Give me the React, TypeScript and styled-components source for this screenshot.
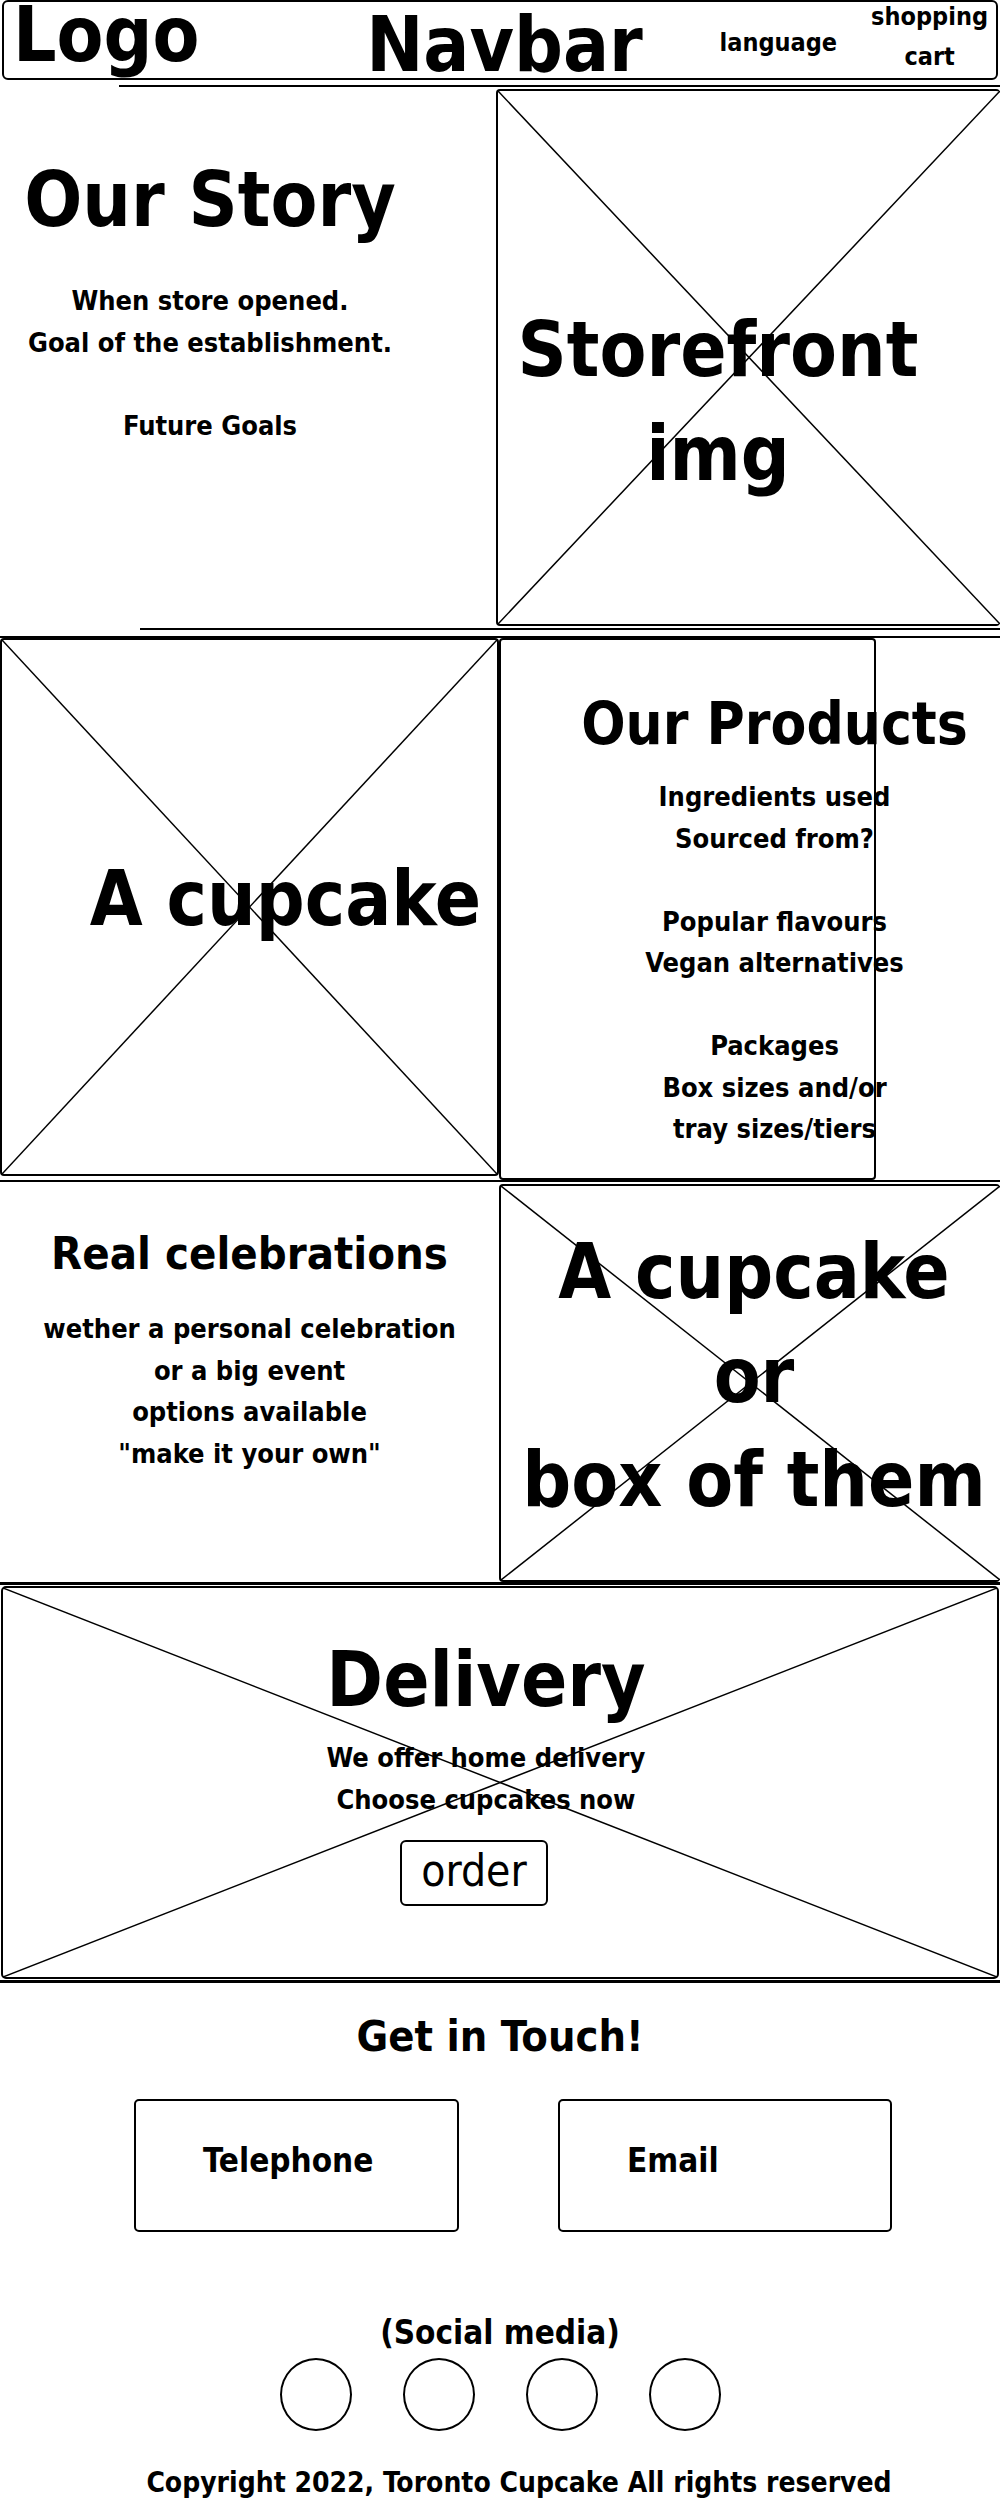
import styled, { createGlobalStyle } from 'styled-components';

const GlobalStyle = createGlobalStyle`
  html, body {
    margin: 0;
    padding: 0;
    background: #fff;
  }
  body {
    font-family: "DejaVu Sans Condensed", "DejaVu Sans", sans-serif;
    font-stretch: condensed;
    font-weight: bold;
    color: #000;
    overflow-x: hidden;
  }
  * {
    box-sizing: border-box;
  }
`

const Page = styled.div`
    width: 1000px;
    height: 2500px;
    overflow: hidden;
`

const NavBar = styled.header`
    display: grid;
    grid-template-columns: 1fr auto 1fr;
    align-items: start;
    height: 80px;
    margin: 0 2px;
    padding-left: 9px;
    border: 2px solid #000;
    border-radius: 6px;
`
const Logo = styled.div`
    font-size: 76px;
    line-height: 64px;
    margin-top: 1px;
`
const NavTitle = styled.div`
    font-size: 76px;
    line-height: 64px;
    margin-top: 11px;
`
const NavLinks = styled.div`
    justify-self: end;
    display: flex;
    align-items: flex-start;
    gap: 34px;
    padding-right: 8px;
`
const NavLink = styled.div<{ $size: number; $lh: number; $top: number }>`
    font-size: ${p => p.$size}px;
    line-height: ${p => p.$lh}px;
    margin-top: ${p => p.$top}px;
    text-align: center;
`

const Rule = styled.div<{ $indent?: number; $gap?: number }>`
    height: 2px;
    background: #000;
    margin-left: ${p => p.$indent ?? 0}px;
    margin-top: ${p => p.$gap ?? 0}px;
`

const Row = styled.section<{ $split: number; $height: number }>`
    display: grid;
    grid-template-columns: ${p => p.$split}px 1fr;
    height: ${p => p.$height}px;
`

const TextCol = styled.div<{ $padTop: number; $padRight?: number }>`
    text-align: center;
    padding-top: ${p => p.$padTop}px;
    padding-right: ${p => p.$padRight ?? 0}px;
`
const Title = styled.h1<{ $size: number; $lh?: number }>`
    margin: 0;
    font-size: ${p => p.$size}px;
    line-height: ${p => (p.$lh ? `${p.$lh}px` : '1.2')};
    font-weight: bold;
`
const Body = styled.p<{ $top?: number }>`
    margin: ${p => p.$top ?? 0}px 0 0;
    font-size: 27px;
    line-height: 41.5px;
`

const ImageBox = styled.div<{ $height: number; $top?: number; $padTop: number; $padLeft?: number; $padRight?: number; $open?: boolean }>`
    position: relative;
    display: flex;
    flex-direction: column;
    align-items: center;
    height: ${p => p.$height}px;
    margin-top: ${p => p.$top ?? 0}px;
    padding: ${p => p.$padTop}px ${p => p.$padRight ?? 0}px 0 ${p => p.$padLeft ?? 0}px;
    border: 2px solid #000;
    border-right: ${p => (p.$open ? 'none' : '2px solid #000')};
    border-radius: 4px;
    text-align: center;
`
const ImageLabel = styled.div`
    position: relative;
    font-size: 76px;
    line-height: 104px;
    white-space: nowrap;
`
const CrossSvg = styled.svg`
    position: absolute;
    inset: 0;
    width: 100%;
    height: 100%;
`

const ProductsFrame = styled.div`
    width: 377px;
    height: 542px;
    padding-top: 49px;
    border: 2px solid #000;
    border-radius: 4px;
`
const ProductsText = styled.div`
    width: 451px;
    margin-left: 48px;
    text-align: center;
    white-space: nowrap;
`

const DeliveryOuter = styled.section`
    padding: 1px 0;
    border-top: 3px solid #000;
    border-bottom: 3px solid #000;
`
const DeliveryBox = styled.div`
    position: relative;
    display: flex;
    flex-direction: column;
    align-items: center;
    height: 393px;
    margin: 0 1px;
    padding: 46px 28px 0 0;
    border: 2px solid #000;
    border-radius: 5px;
    text-align: center;
`
const DeliveryText = styled.div`
    position: relative;
`
const OrderButton = styled.button`
    position: relative;
    width: 148px;
    height: 66px;
    margin: 20px 24px 0 0;
    padding: 0 0 4px;
    background: #fff;
    color: #000;
    border: 2px solid #000;
    border-radius: 6px;
    font-family: inherit;
    font-stretch: condensed;
    font-weight: normal;
    font-size: 44px;
    line-height: 1;
`

const Contact = styled.section`
    padding-top: 28px;
    text-align: center;
`
const ContactRow = styled.div`
    display: flex;
    gap: 99px;
    margin-top: 38px;
    padding-left: 134px;
`
const ContactCard = styled.div<{ $width: number }>`
    width: ${p => p.$width}px;
    height: 133px;
    padding: 40px 0 0 67px;
    border: 2px solid #000;
    border-radius: 5px;
    text-align: left;
    font-size: 33px;
    line-height: 40px;
`
const SocialLabel = styled.div`
    margin-top: 81px;
    font-size: 33px;
    line-height: 40px;
`
const Circles = styled.div`
    display: flex;
    justify-content: center;
    gap: 51px;
    margin-top: 5px;
`
const Circle = styled.span`
    width: 72px;
    height: 73px;
    border: 2px solid #000;
    border-radius: 50%;
`
const Copyright = styled.div`
    margin-top: 35px;
    padding-left: 38px;
    font-size: 28px;
    line-height: 34px;
    white-space: nowrap;
`

function Cross() {
    return (
        <CrossSvg viewBox="0 0 100 100" preserveAspectRatio="none">
            <line x1="0" y1="0" x2="100" y2="100" stroke="#000" strokeWidth="1.5" vectorEffect="non-scaling-stroke" />
            <line x1="100" y1="0" x2="0" y2="100" stroke="#000" strokeWidth="1.5" vectorEffect="non-scaling-stroke" />
        </CrossSvg>
    )
}

function App() {
    return (
        <Page>
            <GlobalStyle />
            <NavBar>
                <Logo>Logo</Logo>
                <NavTitle>Navbar</NavTitle>
                <NavLinks>
                    <NavLink $size={25} $lh={30} $top={26}>language</NavLink>
                    <NavLink $size={25} $lh={40} $top={-5}>shopping<br />cart</NavLink>
                </NavLinks>
            </NavBar>

            <Rule $indent={119} $gap={5} />
            <Row $split={496} $height={541}>
                <TextCol $padTop={67} $padRight={76}>
                    <Title $size={76}>Our Story</Title>
                    <Body $top={35}>
                        When store opened.<br />
                        Goal of the establishment.<br />
                        <br />
                        Future Goals
                    </Body>
                </TextCol>
                <ImageBox $height={537} $top={2} $padTop={207} $padRight={62} $open>
                    <Cross />
                    <ImageLabel>Storefront<br />img</ImageLabel>
                </ImageBox>
            </Row>
            <Rule $indent={140} />

            <Rule $gap={6} />
            <Row $split={499} $height={542}>
                <ImageBox $height={538} $padTop={207} $padLeft={72}>
                    <Cross />
                    <ImageLabel>A cupcake</ImageLabel>
                </ImageBox>
                <ProductsFrame>
                    <ProductsText>
                        <Title $size={58} $lh={70}>Our Products</Title>
                        <Body $top={17}>
                            Ingredients used<br />
                            Sourced from?<br />
                            <br />
                            Popular flavours<br />
                            Vegan alternatives<br />
                            <br />
                            Packages<br />
                            Box sizes and/or<br />
                            tray sizes/tiers
                        </Body>
                    </ProductsText>
                </ProductsFrame>
            </Row>
            <Rule />

            <Row $split={499} $height={400}>
                <TextCol $padTop={45}>
                    <Title $size={45} $lh={54}>Real celebrations</Title>
                    <Body $top={27}>
                        wether a personal celebration<br />
                        or a big event<br />
                        options available<br />
                        "make it your own"
                    </Body>
                </TextCol>
                <ImageBox $height={398} $top={2} $padTop={34} $padLeft={7} $open>
                    <Cross />
                    <ImageLabel>A cupcake<br />or<br />box of them</ImageLabel>
                </ImageBox>
            </Row>

            <DeliveryOuter>
                <DeliveryBox>
                    <Cross />
                    <DeliveryText>
                        <Title $size={76}>Delivery</Title>
                        <Body $top={12}>
                            We offer home delivery<br />
                            Choose cupcakes now
                        </Body>
                    </DeliveryText>
                    <OrderButton type="button">order</OrderButton>
                </DeliveryBox>
            </DeliveryOuter>

            <Contact>
                <Title $size={43} $lh={50}>Get in Touch!</Title>
                <ContactRow>
                    <ContactCard $width={325}>Telephone</ContactCard>
                    <ContactCard $width={334}>Email</ContactCard>
                </ContactRow>
                <SocialLabel>(Social media)</SocialLabel>
                <Circles>
                    <Circle />
                    <Circle />
                    <Circle />
                    <Circle />
                </Circles>
                <Copyright>Copyright 2022, Toronto Cupcake All rights reserved</Copyright>
            </Contact>
        </Page>
    )
}

export default App;
